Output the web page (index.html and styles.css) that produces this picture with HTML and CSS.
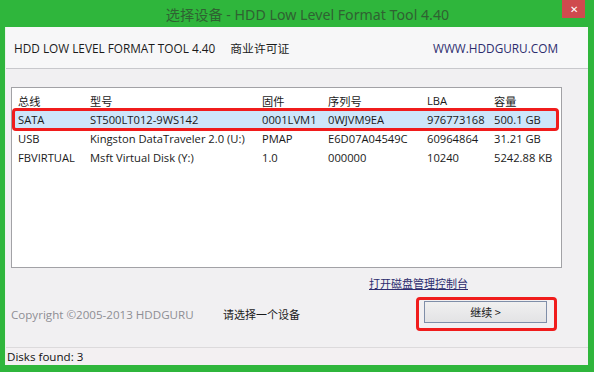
FILE: index.html
```html
<!DOCTYPE html>
<html lang="zh-CN">
<head>
    <meta charset="UTF-8">
    <title>选择设备 - HDD Low Level Format Tool 4.40</title>
    <link rel="stylesheet" href="styles.css">
</head>
<body>
    <div class="window">
        <div class="titlebar">
            <span class="title">选择设备 - HDD Low Level Format Tool 4.40</span>
            <span class="close">&#x2715;</span>
        </div>

        <div class="client">
            <div class="header">
                <span class="product">HDD LOW LEVEL FORMAT TOOL 4.40</span>
                <span class="license">商业许可证</span>
                <span class="site">WWW.HDDGURU.COM</span>
            </div>

            <div class="main">
                <div class="disk-list">
                    <div class="row head">
                        <span>总线</span><span>型号</span><span>固件</span><span>序列号</span><span>LBA</span><span>容量</span>
                    </div>
                    <div class="row selected">
                        <span>SATA</span><span>ST500LT012-9WS142</span><span>0001LVM1</span><span>0WJVM9EA</span><span>976773168</span><span>500.1 GB</span>
                    </div>
                    <div class="row">
                        <span>USB</span><span>Kingston DataTraveler 2.0 (U:)</span><span>PMAP</span><span>E6D07A04549C</span><span>60964864</span><span>31.21 GB</span>
                    </div>
                    <div class="row">
                        <span>FBVIRTUAL</span><span>Msft Virtual Disk (Y:)</span><span>1.0</span><span>000000</span><span>10240</span><span>5242.88 KB</span>
                    </div>
                </div>

                <div class="link-line">
                    <a href="#" class="console-link">打开磁盘管理控制台</a>
                </div>

                <div class="action-line">
                    <span class="copyright">Copyright ©2005-2013 HDDGURU</span>
                    <span class="hint">请选择一个设备</span>
                    <span class="mark">
                        <button class="continue">继续 &gt;</button>
                    </span>
                </div>
            </div>

            <div class="statusbar">Disks found: 3</div>
        </div>
    </div>
</body>
</html>
```

FILE: styles.css
```css
:root {
    --frame-green: #2fb63c;
    --mark-red: #f01c1c;
    --navy: #2c2c6e;
}

html, body {
    margin: 0;
    padding: 0;
}

body {
    font-family: "Open Sans", "Noto Sans CJK SC", sans-serif;
    font-size: 11px;
    color: #1a1a1a;
}

.window {
    width: 594px;
    height: 372px;
    background: var(--frame-green);
    display: flex;
    flex-direction: column;
    box-sizing: border-box;
    padding: 0 6px 7px 5px;
}

.titlebar {
    height: 27px;
    display: flex;
    align-items: center;
    justify-content: center;
    position: relative;
}

.title {
    font-family: "Noto Sans", "Noto Sans CJK SC", sans-serif;
    font-size: 14.2px;
    color: #2f6232;
    margin-left: 22px;
}

.close {
    position: absolute;
    right: 3px;
    top: 0;
    width: 23px;
    height: 18px;
    background: #cf4a4e;
    color: #fff;
    font-size: 10px;
    display: flex;
    align-items: center;
    justify-content: center;
}

.client {
    flex: 1;
    background: #f1f0f2;
    display: flex;
    flex-direction: column;
    border-left: 1px solid #e8f5e8;
}

.header {
    height: 41px;
    background: #f7f7f8;
    border-bottom: 1px solid #c8c8cc;
    display: flex;
    align-items: center;
    padding: 0 30px 0 8px;
    font-size: 11.8px;
}

.license {
    margin-left: 15px;
}

.site {
    margin-left: auto;
    color: var(--navy);
}

.main {
    flex: 1;
    padding: 18px 26px 0 5px;
}

.disk-list {
    height: 176px;
    background: #fff;
    border: 1px solid #a2a2a6;
    padding-top: 3px;
    font-size: 11.2px;
}

.row {
    display: grid;
    grid-template-columns: 72px 172px 66px 99px 67px 1fr;
    height: 19px;
    align-items: center;
    padding-left: 4px;
    margin: 0 2px;
    white-space: nowrap;
}

.row.selected {
    background: #cde6fa;
    position: relative;
}

.row.selected::after {
    content: "";
    position: absolute;
    left: -2px;
    right: 0;
    top: -2px;
    bottom: -2px;
    border: 3px solid var(--mark-red);
    border-radius: 4px;
}

.link-line {
    text-align: right;
    padding: 7px 94px 0 0;
    height: 18px;
}

.console-link {
    color: var(--navy);
    font-size: 11px;
}

.action-line {
    display: flex;
    align-items: center;
    margin-top: 4px;
}

.copyright {
    color: #8e8e94;
    font-size: 11.6px;
    width: 212px;
}

.hint {
    font-size: 11px;
}

.mark {
    margin-left: auto;
    margin-right: 5px;
    border: 3px solid var(--mark-red);
    border-radius: 4px;
    padding: 1px 7px 5px 5px;
    display: flex;
}

.continue {
    width: 123px;
    height: 22px;
    font-family: "Noto Sans CJK SC", sans-serif;
    font-size: 11px;
    color: #1a1a1a;
    background: linear-gradient(#f0f0f0, #e3e3e5);
    border: 1px solid #7f8ea8;
    border-radius: 0;
}

.statusbar {
    height: 17px;
    border-top: 1px solid #dcdadc;
    background: #f3f0f2;
    padding-left: 1px;
    font-size: 11.6px;
    color: #111;
    line-height: 17px;
}
```
